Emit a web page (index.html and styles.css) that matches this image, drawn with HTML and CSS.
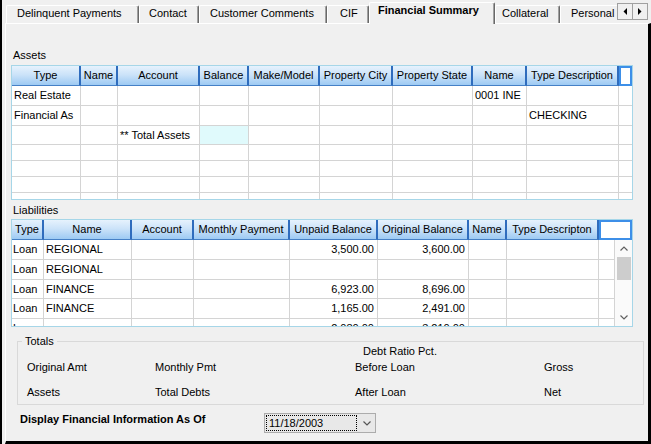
FILE: index.html
```html
<!DOCTYPE html>
<html>
<head>
<meta charset="utf-8">
<link rel="stylesheet" href="styles.css">
</head>
<body>
<div class="window">
  <div class="tabstrip">
    <div class="tabs">
      <div class="tab tab-dp">Delinquent Payments</div>
      <div class="tab tab-contact">Contact</div>
      <div class="tab tab-cc">Customer Comments</div>
      <div class="tab tab-cif">CIF</div>
      <div class="tab tab-fs active">Financial Summary</div>
      <div class="tab tab-col">Collateral</div>
      <div class="tab tab-per">Personal Info</div>
    </div>
    <div class="tabscroll">
      <div class="sbtn"><svg width="4" height="7" viewBox="0 0 4 7"><polygon points="4,0 4,7 0.5,3.5" fill="#000"/></svg></div>
      <div class="sbtn"><svg width="4" height="7" viewBox="0 0 4 7"><polygon points="0,0 0,7 3.5,3.5" fill="#000"/></svg></div>
    </div>
  </div>
  <div class="panel">
    <div class="sec-label">Assets</div>
    <div class="grid assets">
      <div class="row">
        <div class="hd">Type</div>
        <div class="hd">Name</div>
        <div class="hd">Account</div>
        <div class="hd">Balance</div>
        <div class="hd">Make/Model</div>
        <div class="hd">Property City</div>
        <div class="hd">Property State</div>
        <div class="hd">Name</div>
        <div class="hd">Type Description</div>
        <div class="hd blank"></div>
      </div>
      <div class="row h20">
        <div class="c">Real Estate</div><div class="c"></div><div class="c"></div><div class="c"></div><div class="c"></div><div class="c"></div><div class="c"></div><div class="c">0001 INE</div><div class="c"></div><div class="c last"></div>
      </div>
      <div class="row h20">
        <div class="c">Financial As</div><div class="c"></div><div class="c"></div><div class="c"></div><div class="c"></div><div class="c"></div><div class="c"></div><div class="c"></div><div class="c">CHECKING</div><div class="c last"></div>
      </div>
      <div class="row h19">
        <div class="c"></div><div class="c"></div><div class="c">** Total Assets</div><div class="c hl"></div><div class="c"></div><div class="c"></div><div class="c"></div><div class="c"></div><div class="c"></div><div class="c last"></div>
      </div>
      <div class="row h16">
        <div class="c"></div><div class="c"></div><div class="c"></div><div class="c"></div><div class="c"></div><div class="c"></div><div class="c"></div><div class="c"></div><div class="c"></div><div class="c last"></div>
      </div>
      <div class="row h16">
        <div class="c"></div><div class="c"></div><div class="c"></div><div class="c"></div><div class="c"></div><div class="c"></div><div class="c"></div><div class="c"></div><div class="c"></div><div class="c last"></div>
      </div>
      <div class="row h16">
        <div class="c"></div><div class="c"></div><div class="c"></div><div class="c"></div><div class="c"></div><div class="c"></div><div class="c"></div><div class="c"></div><div class="c"></div><div class="c last"></div>
      </div>
      <div class="row h16">
        <div class="c"></div><div class="c"></div><div class="c"></div><div class="c"></div><div class="c"></div><div class="c"></div><div class="c"></div><div class="c"></div><div class="c"></div><div class="c last"></div>
      </div>
    </div>

    <div class="sec-label liab-label">Liabilities</div>
    <div class="grid liab">
      <div class="row hrow">
        <div class="hd">Type</div>
        <div class="hd">Name</div>
        <div class="hd">Account</div>
        <div class="hd">Monthly Payment</div>
        <div class="hd">Unpaid Balance</div>
        <div class="hd">Original Balance</div>
        <div class="hd">Name</div>
        <div class="hd">Type Descripton</div>
        <div class="hd blank"></div>
      </div>
      <div class="lbody">
        <div class="lrows">
          <div class="row lrow h20">
            <div class="c tight">Loan</div><div class="c">REGIONAL</div><div class="c"></div><div class="c"></div><div class="c num">3,500.00</div><div class="c num">3,600.00</div><div class="c"></div><div class="c"></div><div class="c"></div>
          </div>
          <div class="row lrow h20">
            <div class="c tight">Loan</div><div class="c">REGIONAL</div><div class="c"></div><div class="c"></div><div class="c num"></div><div class="c num"></div><div class="c"></div><div class="c"></div><div class="c"></div>
          </div>
          <div class="row lrow h19">
            <div class="c tight">Loan</div><div class="c">FINANCE</div><div class="c"></div><div class="c"></div><div class="c num">6,923.00</div><div class="c num">8,696.00</div><div class="c"></div><div class="c"></div><div class="c"></div>
          </div>
          <div class="row lrow h20">
            <div class="c tight">Loan</div><div class="c">FINANCE</div><div class="c"></div><div class="c"></div><div class="c num">1,165.00</div><div class="c num">2,491.00</div><div class="c"></div><div class="c"></div><div class="c"></div>
          </div>
          <div class="row lrow h20">
            <div class="c tight">Loan</div><div class="c"></div><div class="c"></div><div class="c"></div><div class="c num">2,080.00</div><div class="c num">3,210.00</div><div class="c"></div><div class="c"></div><div class="c"></div>
          </div>
        </div>
        <div class="vscroll">
          <div class="sb-arrow"><svg width="8" height="5" viewBox="0 0 8 5"><polyline points="0.5,4.5 4,1 7.5,4.5" fill="none" stroke="#606060" stroke-width="1.2"/></svg></div>
          <div class="sb-thumb"></div>
          <div class="sb-space"></div>
          <div class="sb-arrow"><svg width="8" height="5" viewBox="0 0 8 5"><polyline points="0.5,0.5 4,4 7.5,0.5" fill="none" stroke="#606060" stroke-width="1.2"/></svg></div>
        </div>
      </div>
    </div>

    <fieldset class="totals">
      <legend>Totals</legend>
      <div class="tgrid">
        <div class="tc debt">Debt Ratio Pct.</div>
        <div class="tc r2">Original Amt</div>
        <div class="tc r2">Monthly Pmt</div>
        <div class="tc r2">Before Loan</div>
        <div class="tc r2">Gross</div>
        <div class="tc r3">Assets</div>
        <div class="tc r3">Total Debts</div>
        <div class="tc r3">After Loan</div>
        <div class="tc r3">Net</div>
      </div>
    </fieldset>

    <div class="asof">
      <div class="asof-label">Display Financial Information As Of</div>
      <div class="combo">
        <div class="combo-val">11/18/2003</div>
        <svg class="combo-arrow" width="8" height="5" viewBox="0 0 8 5"><polyline points="0.5,0.5 4,4 7.5,0.5" fill="none" stroke="#555" stroke-width="1.2"/></svg>
      </div>
    </div>
  </div>
</div>
</body>
</html>
```

FILE: styles.css
```css
* { box-sizing: border-box; }

body {
  margin: 0;
  background: #f0f0f0;
  font-family: "Liberation Sans", Arial, sans-serif;
  font-size: 11px;
  color: #000;
}

.window {
  width: 651px;
  height: 444px;
  border-left: 2px solid #000;
  display: flex;
  flex-direction: column;
  background: #f0f0f0;
  overflow: hidden;
}

/* ---------- tabs ---------- */
.tabstrip {
  height: 24px;
  margin-bottom: -1px;
  display: flex;
  flex: none;
}

.tabs {
  width: 615px;
  flex: none;
  padding-left: 4px;
  display: flex;
  align-items: flex-end;
  overflow: hidden;
}

.tab {
  flex: none;
  height: 18px;
  margin-bottom: 1px;
  background: #f0f0f0;
  border-top: 1px solid #fff;
  border-left: 1px solid #fff;
  border-right: 1px solid #696969;
  box-shadow: inset -1px 0 #a0a0a0;
  border-radius: 2px 2px 0 0;
  line-height: 15px;
  white-space: nowrap;
  overflow: hidden;
}

.tab.active {
  height: 22px;
  margin-bottom: 0;
  font-weight: bold;
  position: relative;
  z-index: 1;
}

.tab-dp { width: 133px; padding-left: 10px; }
.tab-contact { width: 60px; padding-left: 9px; }
.tab-cc { width: 128px; padding-left: 10px; }
.tab-cif { width: 42px; padding-left: 12px; }
.tab-fs { width: 126px; padding-left: 8px; }
.tab-col { width: 65px; padding-left: 6px; }
.tab-per { width: 70px; padding-left: 10px; }

.tabscroll {
  display: flex;
  margin-top: 3px;
  height: 17px;
}

.sbtn {
  width: 16px;
  height: 17px;
  border: 1px solid #a0a0a0;
  background: #f0f0f0;
  display: flex;
  align-items: center;
  justify-content: center;
}

.sbtn + .sbtn { margin-left: -1px; }

/* ---------- panel ---------- */
.panel {
  flex: 1;
  margin-left: 3px;
  border-top: 1px solid #fff;
  border-left: 1px solid #fff;
  border-right: 3px solid #000;
  border-bottom: 3px solid #000;
  padding: 24px 0 0 5px;
}

.sec-label {
  height: 14px;
  line-height: 14px;
  padding-left: 2px;
}

.liab-label { margin-top: 3px; }

.grid {
  width: 622px;
  border: 1px solid #a6d6e8;
  margin-top: 3px;
  overflow: hidden;
  background: #fff;
}

.assets { height: 135px; }
.liab { height: 108px; margin-top: 2px; }

.row { display: grid; }

.assets .row {
  grid-template-columns: 69px 37px 82px 49px 71px 73px 80px 54px 92px 13px;
}

.liab .hrow {
  grid-template-columns: 32px 88px 62px 96px 88px 91px 38px 92px 33px;
}

.liab .lrow {
  grid-template-columns: 32px 88px 62px 96px 88px 91px 38px 92px 16px;
}

.hd {
  height: 20px;
  background: linear-gradient(#e6f2fd, #cce3f9 45%, #9dcaf3);
  border-right: 2px solid #2f6cbd;
  border-bottom: 1px solid #4580c6;
  text-align: center;
  line-height: 19px;
  white-space: nowrap;
  overflow: hidden;
}

.hd.blank {
  background: #fff;
  border: 2px solid #3d8fe8;
}

.c {
  border-right: 1px solid #d4d4d4;
  border-bottom: 1px solid #d4d4d4;
  padding: 0 2px;
  white-space: nowrap;
  overflow: hidden;
  line-height: 19px;
  background: #fff;
}

.c.tight { padding-left: 1px; }
.c.num { text-align: right; padding-right: 3px; }
.c.last { border-right: none; }
.c.hl { background: #e0fafc; }

.h20 { height: 20px; }
.h19 { height: 19px; }
.h19 .c { line-height: 18px; }
.h16 { height: 16px; }
.h16 .c { line-height: 15px; }

.lbody {
  display: flex;
  height: 86px;
}

.lrows {
  width: 603px;
  overflow: hidden;
}

.vscroll {
  width: 17px;
  background: #fafafa;
  display: flex;
  flex-direction: column;
}

.sb-arrow {
  height: 17px;
  display: flex;
  align-items: center;
  justify-content: center;
}

.sb-thumb {
  height: 23px;
  margin: 0 1px 0 2px;
  background: #cdcdcd;
}

.sb-space { flex: 1; }

/* ---------- totals ---------- */
.totals {
  margin: 8px 0 0 6px;
  width: 627px;
  border: 1px solid #d9d9d9;
  padding: 0 0 5px 9px;
  min-width: 0;
}

.totals legend {
  margin-left: -5px;
  padding: 0 3px;
  line-height: 12px;
  height: 12px;
}

.tgrid {
  display: grid;
  grid-template-columns: 128px 200px 189px 1fr;
  grid-template-rows: 13px 16px 25px;
  align-items: end;
  margin-top: -2px;
}

.tc {
  line-height: 14px;
  white-space: nowrap;
}

.tc.r2 { grid-row: 2; }
.tc.r3 { grid-row: 3; }

.tc.debt {
  grid-column: 3;
  grid-row: 1;
  padding-left: 8px;
  line-height: 13px;
}

/* ---------- as of ---------- */
.asof {
  display: flex;
  align-items: flex-start;
  height: 28px;
}

.asof-label {
  margin: 7px 0 0 9px;
  width: 244px;
  line-height: 14px;
  font-weight: bold;
  white-space: nowrap;
}

.combo {
  margin-top: 8px;
  width: 112px;
  height: 20px;
  border: 1px solid #acacac;
  background: #e8e8e8;
  display: flex;
  align-items: center;
  padding-left: 1px;
}

.combo-val {
  width: 91px;
  height: 16px;
  border: 1px dotted #000;
  line-height: 14px;
  padding-left: 2px;
}

.combo-arrow { margin-left: 6px; }
```
